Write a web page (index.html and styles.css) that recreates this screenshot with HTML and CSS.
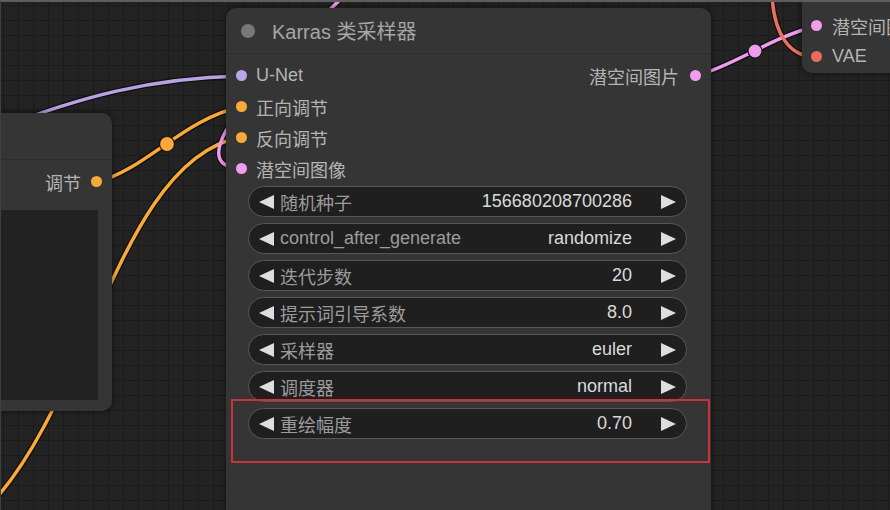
FILE: index.html
```html
<!DOCTYPE html>
<html lang="zh">
<head>
<meta charset="utf-8">
<title>Karras 类采样器</title>
<link rel="stylesheet" href="styles.css">
</head>
<body>
<div class="canvas">
  <svg class="wires" width="890" height="510" viewBox="0 0 890 510">
    <g class="wire-outline">
      <path d="M 0 128 C 80 97, 150 78, 241 76"/>
      <path d="M 97 182 C 145 170, 185 118, 241 107"/>
      <path d="M -10 505 C 90 400, 120 160, 241 137"/>
      <path d="M 241 168 C 195 168, 215 120, 350 -10"/>
      <path d="M 696 76 C 735 65, 770 38, 816 26"/>
      <path d="M 772 -5 C 774 35, 790 57, 816 57"/>
    </g>
    <path class="wire lavender" d="M 0 128 C 80 97, 150 78, 241 76"/>
    <path class="wire orange" d="M 97 182 C 145 170, 185 118, 241 107"/>
    <path class="wire orange" d="M -10 505 C 90 400, 120 160, 241 137"/>
    <path class="wire pink" d="M 241 168 C 195 168, 215 120, 350 -10"/>
    <path class="wire pink" d="M 696 76 C 735 65, 770 38, 816 26"/>
    <path class="wire salmon" d="M 772 -5 C 774 35, 790 57, 816 57"/>
    <circle class="mid orange-fill" cx="167" cy="144" r="7.5"/>
    <circle class="mid pink-fill" cx="755" cy="51" r="7"/>
  </svg>

  <div class="node node-left">
    <div class="node-title"></div>
    <div class="slot slot-out">
      <span class="slot-label">调节</span><i class="dot orange-dot"></i>
    </div>
    <div class="textarea"></div>
  </div>

  <div class="node node-main">
    <div class="node-title">
      <i class="title-dot"></i><span class="title-text">Karras 类采样器</span>
    </div>
    <div class="slots">
      <div class="slot-col">
        <div class="slot"><i class="dot lavender-dot"></i><span class="slot-label">U-Net</span></div>
        <div class="slot"><i class="dot orange-dot"></i><span class="slot-label">正向调节</span></div>
        <div class="slot"><i class="dot orange-dot"></i><span class="slot-label">反向调节</span></div>
        <div class="slot"><i class="dot pink-dot"></i><span class="slot-label">潜空间图像</span></div>
      </div>
      <div class="slot-col out-col">
        <div class="slot slot-out"><span class="slot-label">潜空间图片</span><i class="dot pink-dot"></i></div>
      </div>
    </div>
    <div class="widgets">
      <div class="widget">
        <svg class="arrow" viewBox="0 0 15 14"><polygon points="15,0 15,14 0,7"/></svg>
        <span class="w-label">随机种子</span><span class="w-value">156680208700286</span>
        <svg class="arrow" viewBox="0 0 15 14"><polygon points="0,0 0,14 15,7"/></svg>
      </div>
      <div class="widget">
        <svg class="arrow" viewBox="0 0 15 14"><polygon points="15,0 15,14 0,7"/></svg>
        <span class="w-label">control_after_generate</span><span class="w-value">randomize</span>
        <svg class="arrow" viewBox="0 0 15 14"><polygon points="0,0 0,14 15,7"/></svg>
      </div>
      <div class="widget">
        <svg class="arrow" viewBox="0 0 15 14"><polygon points="15,0 15,14 0,7"/></svg>
        <span class="w-label">迭代步数</span><span class="w-value">20</span>
        <svg class="arrow" viewBox="0 0 15 14"><polygon points="0,0 0,14 15,7"/></svg>
      </div>
      <div class="widget">
        <svg class="arrow" viewBox="0 0 15 14"><polygon points="15,0 15,14 0,7"/></svg>
        <span class="w-label">提示词引导系数</span><span class="w-value">8.0</span>
        <svg class="arrow" viewBox="0 0 15 14"><polygon points="0,0 0,14 15,7"/></svg>
      </div>
      <div class="widget">
        <svg class="arrow" viewBox="0 0 15 14"><polygon points="15,0 15,14 0,7"/></svg>
        <span class="w-label">采样器</span><span class="w-value">euler</span>
        <svg class="arrow" viewBox="0 0 15 14"><polygon points="0,0 0,14 15,7"/></svg>
      </div>
      <div class="widget">
        <svg class="arrow" viewBox="0 0 15 14"><polygon points="15,0 15,14 0,7"/></svg>
        <span class="w-label">调度器</span><span class="w-value">normal</span>
        <svg class="arrow" viewBox="0 0 15 14"><polygon points="0,0 0,14 15,7"/></svg>
      </div>
      <div class="widget">
        <svg class="arrow" viewBox="0 0 15 14"><polygon points="15,0 15,14 0,7"/></svg>
        <span class="w-label">重绘幅度</span><span class="w-value">0.70</span>
        <svg class="arrow" viewBox="0 0 15 14"><polygon points="0,0 0,14 15,7"/></svg>
      </div>
    </div>
  </div>

  <div class="node node-right">
    <div class="slot"><i class="dot pink-dot"></i><span class="slot-label">潜空间图像</span></div>
    <div class="slot"><i class="dot salmon-dot"></i><span class="slot-label">VAE</span></div>
  </div>

  <div class="highlight"></div>
</div>
</body>
</html>
```
FILE: styles.css
```css
* { box-sizing: border-box; }

html, body {
  margin: 0;
  padding: 0;
  background: #222222;
}

body {
  width: 890px;
  height: 510px;
  overflow: hidden;
  font-family: "Liberation Sans", "Noto Sans CJK SC", sans-serif;
}

.canvas {
  position: relative;
  width: 890px;
  height: 510px;
  overflow: hidden;
  background-color: #232323;
  background-image:
    linear-gradient(to right, #1b1b1b 1px, transparent 1px),
    linear-gradient(to bottom, #1b1b1b 1px, transparent 1px);
  background-size: 15px 15px;
  background-position: 3px 5px;
}

.canvas::after {
  content: "";
  position: absolute;
  inset: 0;
  border-top: 2px solid #5e5e5e;
  border-left: 1px solid #3f3f3f;
  pointer-events: none;
}

.wires {
  position: absolute;
  left: 0;
  top: 0;
}

.wire-outline path {
  fill: none;
  stroke: #101010;
  stroke-width: 6;
}

.wire {
  fill: none;
  stroke-width: 3.5;
}
.wire.lavender { stroke: #b8a2e3; }
.wire.orange { stroke: #f9a93a; }
.wire.pink { stroke: #ef9bee; }
.wire.salmon { stroke: #e8715f; }

.mid { stroke: #151515; stroke-width: 1.2; }
.orange-fill { fill: #f9a93a; }
.pink-fill { fill: #ef9bee; }

/* nodes */
.node {
  position: absolute;
  background: #353535;
  border-radius: 10px;
  box-shadow: 0 0 6px rgba(0, 0, 0, 0.55);
}

.node-title {
  display: flex;
  align-items: center;
  border-bottom: 1px solid #2d2d2d;
}

.slot {
  display: flex;
  align-items: center;
  height: 31px;
  gap: 9px;
}

.slot-label {
  font-size: 18px;
  color: #b4b4b4;
  white-space: nowrap;
}

.dot {
  display: block;
  flex: none;
  width: 11px;
  height: 11px;
  border-radius: 50%;
}
.lavender-dot { background: #bba6e6; }
.orange-dot { background: #f9a93a; }
.pink-dot { background: #f09df0; }
.salmon-dot { background: #ea6a5c; }

/* left node */
.node-left {
  left: -20px;
  top: 113px;
  width: 132px;
  height: 298px;
  display: flex;
  flex-direction: column;
}
.node-left .node-title {
  height: 47px;
}
.node-left .slot-out {
  justify-content: flex-end;
  padding-right: 10px;
  margin-top: 6px;
  gap: 10px;
}
.node-left .textarea {
  margin: 13px 14px 11px 0;
  flex: 1;
  background: #222222;
}

/* main node */
.node-main {
  left: 226px;
  top: 8px;
  width: 485px;
  height: 530px;
}
.node-main .node-title {
  height: 46px;
  padding-left: 15px;
  gap: 17px;
  border-radius: 10px 10px 0 0;
}
.title-dot {
  display: block;
  width: 14px;
  height: 14px;
  border-radius: 50%;
  background: #787878;
}
.title-text {
  font-size: 20px;
  color: #a6a6a6;
  white-space: nowrap;
}

.slots {
  display: flex;
  justify-content: space-between;
  padding: 6px 10px 0 10px;
}
.out-col .slot {
  gap: 11px;
}

.widgets {
  display: flex;
  flex-direction: column;
  gap: 6px;
  padding: 2px 24px 0 22px;
}

.widget {
  display: flex;
  align-items: center;
  height: 31px;
  padding: 0 10px;
  background: #1f1f1f;
  border: 1px solid #575757;
  border-radius: 16px;
  font-size: 18px;
}
.arrow {
  flex: none;
  width: 15px;
  height: 14px;
  fill: #dedede;
}
.w-label {
  margin-left: 6px;
  color: #9c9c9c;
  white-space: nowrap;
  flex: 1;
}
.w-value {
  color: #dadada;
  margin-right: 29px;
  white-space: nowrap;
}

/* right node */
.node-right {
  left: 802px;
  top: -20px;
  width: 130px;
  height: 93px;
  padding: 30px 0 0 9px;
}
.node-right .slot {
  gap: 10px;
}

/* annotation */
.highlight {
  position: absolute;
  left: 231px;
  top: 399px;
  width: 479px;
  height: 64px;
  border: 2px solid #c9333b;
}
```
